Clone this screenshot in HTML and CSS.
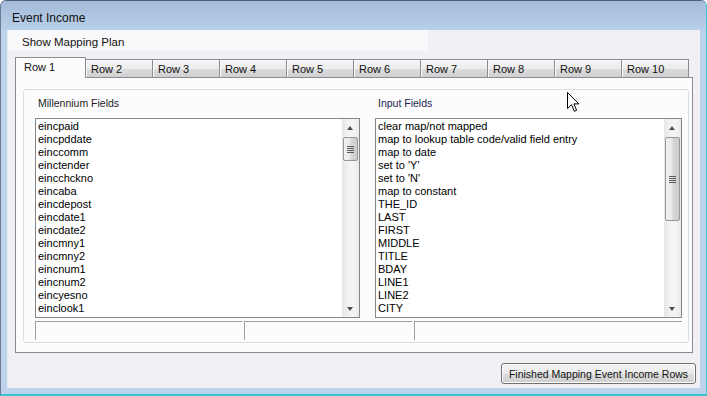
FILE: index.html
```html
<!DOCTYPE html>
<html lang="en">
<head>
    <meta charset="UTF-8">
    <title>Event Income</title>
    <link rel="stylesheet" href="styles.css">
</head>
<body>
    <div class="window">
        <div class="titlebar">Event Income</div>

        <div class="client">
            <div class="plan-header">Show Mapping Plan</div>

            <div class="tabs">
                <div class="tab selected">Row 1</div>
                <div class="tab">Row 2</div>
                <div class="tab">Row 3</div>
                <div class="tab">Row 4</div>
                <div class="tab">Row 5</div>
                <div class="tab">Row 6</div>
                <div class="tab">Row 7</div>
                <div class="tab">Row 8</div>
                <div class="tab">Row 9</div>
                <div class="tab">Row 10</div>
            </div>

            <div class="tab-panel">
                <div class="group-box">
                    <div class="columns">
                        <div class="column left-col">
                            <div class="field-label">Millennium Fields</div>
                            <div class="listbox">
                                <ul class="items">
                                    <li>eincpaid</li>
                                    <li>eincpddate</li>
                                    <li>einccomm</li>
                                    <li>einctender</li>
                                    <li>eincchckno</li>
                                    <li>eincaba</li>
                                    <li>eincdepost</li>
                                    <li>eincdate1</li>
                                    <li>eincdate2</li>
                                    <li>eincmny1</li>
                                    <li>eincmny2</li>
                                    <li>eincnum1</li>
                                    <li>eincnum2</li>
                                    <li>eincyesno</li>
                                    <li>einclook1</li>
                                </ul>
                                <div class="scrollbar">
                                    <div class="arrow up"></div>
                                    <div class="track">
                                        <div class="thumb short"><span class="grip"></span></div>
                                    </div>
                                    <div class="arrow down"></div>
                                </div>
                            </div>
                        </div>

                        <div class="column right-col">
                            <div class="field-label input-label">Input Fields</div>
                            <div class="listbox">
                                <ul class="items">
                                    <li>clear map/not mapped</li>
                                    <li>map to lookup table code/valid field entry</li>
                                    <li>map to date</li>
                                    <li>set to 'Y'</li>
                                    <li>set to 'N'</li>
                                    <li>map to constant</li>
                                    <li>THE_ID</li>
                                    <li>LAST</li>
                                    <li>FIRST</li>
                                    <li>MIDDLE</li>
                                    <li>TITLE</li>
                                    <li>BDAY</li>
                                    <li>LINE1</li>
                                    <li>LINE2</li>
                                    <li>CITY</li>
                                </ul>
                                <div class="scrollbar">
                                    <div class="arrow up"></div>
                                    <div class="track">
                                        <div class="thumb long"><span class="grip"></span></div>
                                    </div>
                                    <div class="arrow down"></div>
                                </div>
                            </div>
                        </div>
                    </div>

                    <div class="status-boxes">
                        <div class="status-box box-a"></div>
                        <div class="status-box box-b"></div>
                        <div class="status-box box-c"></div>
                    </div>

                    <!-- mouse pointer captured in the screenshot -->
                    <svg class="cursor" width="13" height="21" viewBox="0 0 13 21">
                        <path d="M0.5 0.5 L0.5 16.5 L4.5 12.7 L7.3 19.3 L9.6 18.3 L6.9 11.9 L12 11.9 Z" fill="#fff" stroke="#000" stroke-width="1"/>
                    </svg>
                </div>
            </div>

            <div class="actions">
                <button class="win-button">Finished Mapping Event Income Rows</button>
            </div>
        </div>
    </div>
</body>
</html>
```

FILE: styles.css
```css
body {
    margin: 0;
    width: 707px;
    height: 396px;
    overflow: hidden;
    font-family: 'Liberation Sans', Arial, sans-serif;
    background: #ffffff;
}

.window {
    box-sizing: border-box;
    width: 707px;
    height: 396px;
    background: #bdd3ec;
    border-top: 1px solid #4e5f76;
    border-left: 1px solid #6d7c90;
    border-right: 1px solid #39c6d6;
    border-bottom: 2px solid #36c3d4;
    border-radius: 6px 6px 0 0;
    display: flex;
    flex-direction: column;
}

.titlebar {
    height: 29px;
    line-height: 35px;
    padding-left: 11px;
    font-size: 12px;
    color: #111;
    background: linear-gradient(#a3bbd8, #b9d0ea);
    border-radius: 5px 5px 0 0;
}

.client {
    margin: 0 6px 0 6px;
    height: 358px;
    background: #f2f0f4;
    border-left: 1px solid #e6eef8;
    display: flex;
    flex-direction: column;
}

.plan-header {
    width: 406px;
    height: 20px;
    line-height: 24px;
    padding-left: 14px;
    font-size: 11.5px;
    color: #111;
    background: #f9f8fb;
}

/* tab strip */
.tabs {
    display: flex;
    align-items: flex-end;
    margin: 7px 0 0 7px;
}

.tab {
    box-sizing: border-box;
    width: 68px;
    height: 18px;
    padding-left: 5px;
    line-height: 18px;
    font-size: 11px;
    color: #111;
    border: 1px solid #898c95;
    border-bottom: none;
    margin-left: -1px;
    background: linear-gradient(#f4f4f4 0%, #ececec 50%, #dcdcdc 51%, #d0d0d0 100%);
    box-shadow: inset 1px 1px 0 #fbfbfb;
}

.tab.selected {
    position: relative;
    z-index: 1;
    width: 71px;
    height: 21px;
    margin-left: 0;
    margin-bottom: -1px;
    padding-left: 8px;
    line-height: 19px;
    background: #fcfcfd;
    box-shadow: none;
}

.tab-panel {
    box-sizing: border-box;
    width: 678px;
    height: 276px;
    margin-left: 7px;
    padding: 11px 4px 0 7px;
    background: #fcfcfd;
    border: 1px solid #898c95;
}

.group-box {
    position: relative;
    box-sizing: border-box;
    width: 666px;
    height: 254px;
    padding: 7px 6px 0 11px;
    border: 1px solid #d5dfe5;
    border-radius: 3px;
}

.columns {
    display: flex;
    gap: 15px;
}

.column {
    display: flex;
    flex-direction: column;
}

.left-col {
    width: 325px;
}

.right-col {
    width: 307px;
}

.field-label {
    height: 13px;
    line-height: 13px;
    padding-left: 3px;
    margin-bottom: 8px;
    font-size: 10.5px;
    color: #1e1e1e;
}

.input-label {
    color: #1c1c52;
}

.listbox {
    box-sizing: border-box;
    height: 200px;
    display: flex;
    background: #ffffff;
    border: 1px solid #828790;
}

.items {
    flex: 1;
    list-style: none;
    margin: 0;
    padding: 1px 0 0 2px;
    font-size: 11px;
    line-height: 13px;
    color: #000;
    overflow: hidden;
}

.scrollbar {
    width: 17px;
    display: flex;
    flex-direction: column;
    background: linear-gradient(90deg, #e6e6e6, #f4f4f4 40%, #f4f4f4 70%, #e9e9e9);
}

.arrow {
    height: 17px;
    position: relative;
}

.arrow::after {
    content: "";
    position: absolute;
    left: 5px;
    width: 0;
    height: 0;
    border-left: 3.5px solid transparent;
    border-right: 3.5px solid transparent;
}

.arrow.up::after {
    top: 7px;
    border-bottom: 4px solid #4d4d4d;
}

.arrow.down::after {
    top: 7px;
    border-top: 4px solid #4d4d4d;
}

.track {
    flex: 1;
}

.thumb {
    box-sizing: border-box;
    margin: 1px 0 0 1px;
    width: 15px;
    border: 1px solid #979797;
    border-radius: 2px;
    background: linear-gradient(90deg, #f2f2f2, #e8e8e8 45%, #d6d6d6 55%, #cdcdcd);
    display: flex;
    align-items: center;
    justify-content: center;
}

.thumb.short {
    height: 24px;
}

.thumb.long {
    height: 84px;
}

.grip {
    width: 7px;
    height: 7px;
    background: repeating-linear-gradient(#5c5c5c 0 1px, transparent 1px 2px);
}

/* sunken panels under the lists */
.status-boxes {
    display: flex;
    gap: 2px;
    margin-top: 3px;
}

.status-box {
    box-sizing: border-box;
    height: 19px;
    border-top: 1px solid #a0a0a0;
    border-left: 1px solid #a0a0a0;
}

.box-a {
    width: 207px;
}

.box-b {
    width: 169px;
}

.box-c {
    width: 268px;
}

.cursor {
    position: absolute;
    left: 543px;
    top: 2px;
}

.actions {
    display: flex;
    justify-content: flex-end;
    margin: 10px 4px 0 0;
}

.win-button {
    box-sizing: border-box;
    width: 195px;
    height: 21px;
    padding: 0;
    font-family: 'Liberation Sans', Arial, sans-serif;
    font-size: 10.5px;
    color: #111;
    border: 1px solid #707070;
    border-radius: 3px;
    background: linear-gradient(#f2f2f2 0%, #ebebeb 50%, #dddddd 51%, #cfcfcf 100%);
    box-shadow: inset 0 0 0 1px #fbfbfb;
}
```
